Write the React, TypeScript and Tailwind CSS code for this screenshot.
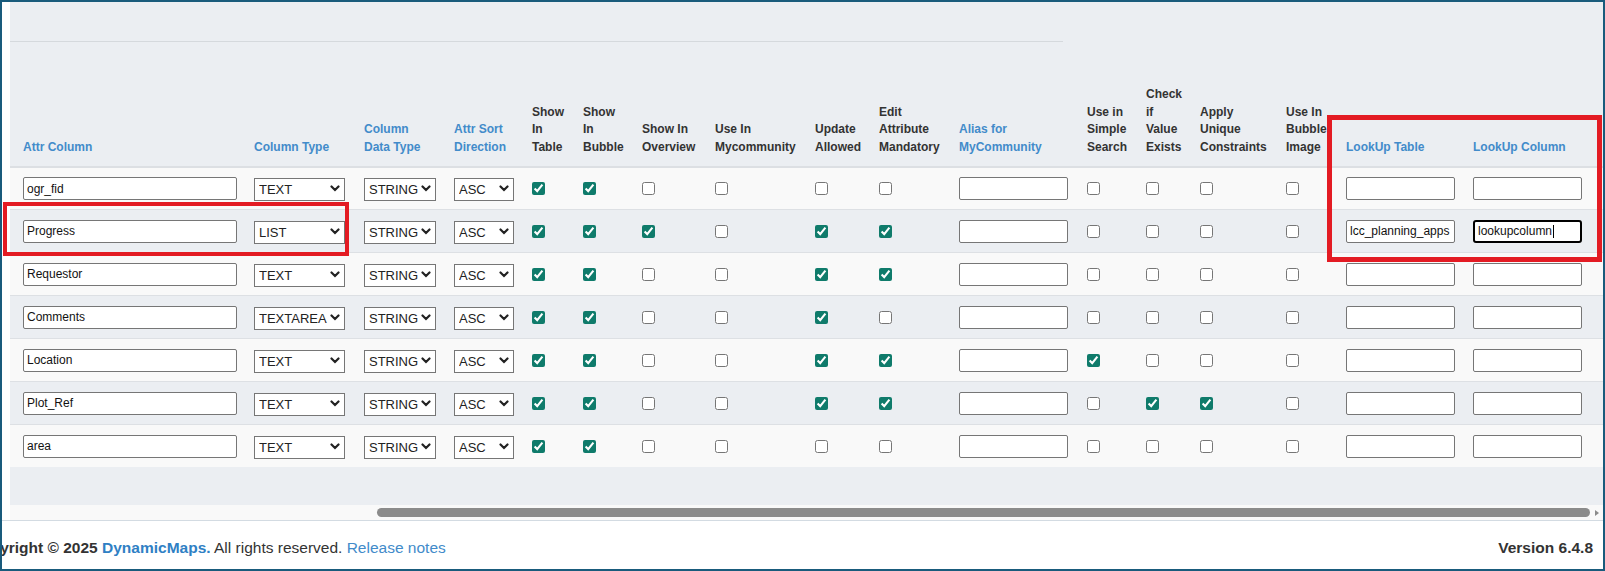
import { ReactNode } from 'react';

interface Col {
    w: string;
    label: string[];
    blue?: boolean;
}

const cols: Col[] = [
    { w: 'w-[231px]', label: ['Attr Column'], blue: true },
    { w: 'w-[110px]', label: ['Column Type'], blue: true },
    { w: 'w-[90px]', label: ['Column', 'Data Type'], blue: true },
    { w: 'w-[78px]', label: ['Attr Sort', 'Direction'], blue: true },
    { w: 'w-[51px]', label: ['Show', 'In', 'Table'] },
    { w: 'w-[59px]', label: ['Show', 'In', 'Bubble'] },
    { w: 'w-[73px]', label: ['Show In', 'Overview'] },
    { w: 'w-[100px]', label: ['Use In', 'Mycommunity'] },
    { w: 'w-[64px]', label: ['Update', 'Allowed'] },
    { w: 'w-[80px]', label: ['Edit', 'Attribute', 'Mandatory'] },
    { w: 'w-[128px]', label: ['Alias for', 'MyCommunity'], blue: true },
    { w: 'w-[59px]', label: ['Use in', 'Simple', 'Search'] },
    { w: 'w-[54px]', label: ['Check', 'if', 'Value', 'Exists'] },
    { w: 'w-[86px]', label: ['Apply', 'Unique', 'Constraints'] },
    { w: 'w-[60px]', label: ['Use In', 'Bubble', 'Image'] },
    { w: 'w-[127px]', label: ['LookUp Table'], blue: true },
    { w: 'w-[130px]', label: ['LookUp Column'], blue: true },
];

interface Row {
    name: string;
    type: string;
    checks: boolean[]; // table, bubble, overview, mycommunity, update, mandatory
    extra: boolean[]; // simple search, value exists, unique, bubble image
    lookupTable?: string;
    lookupColumn?: string;
}

const rows: Row[] = [
    { name: 'ogr_fid', type: 'TEXT', checks: [true, true, false, false, false, false], extra: [false, false, false, false] },
    {
        name: 'Progress',
        type: 'LIST',
        checks: [true, true, true, false, true, true],
        extra: [false, false, false, false],
        lookupTable: 'lcc_planning_apps',
        lookupColumn: 'lookupcolumn',
    },
    { name: 'Requestor', type: 'TEXT', checks: [true, true, false, false, true, true], extra: [false, false, false, false] },
    { name: 'Comments', type: 'TEXTAREA', checks: [true, true, false, false, true, false], extra: [false, false, false, false] },
    { name: 'Location', type: 'TEXT', checks: [true, true, false, false, true, true], extra: [true, false, false, false] },
    { name: 'Plot_Ref', type: 'TEXT', checks: [true, true, false, false, true, true], extra: [false, true, true, false] },
    { name: 'area', type: 'TEXT', checks: [true, true, false, false, false, false], extra: [false, false, false, false] },
];

function TextBox({ value, w }: { value: string; w: string }) {
    return (
        <input
            readOnly
            defaultValue={value}
            className={`${w} h-[23px] rounded-[2px] border border-[#767676] bg-white px-[3px] text-[12px] text-[#111] outline-none`}
        />
    );
}

function FocusedBox({ value }: { value: string }) {
    return (
        <div className="flex h-[23px] w-[109px] items-center rounded-[3px] border-2 border-black bg-white pl-[3px] text-[12px] text-[#111]">
            <span>{value}</span>
            <span className="ml-px inline-block h-[13px] w-px bg-black" />
        </div>
    );
}

function Select({ value, options, w }: { value: string; options: string[]; w: string }) {
    return (
        <div className={`relative h-[23px] ${w}`}>
            <select
                defaultValue={value}
                className="h-full w-full appearance-none border border-[#767676] bg-white pl-[4px] text-[13px] text-[#222] outline-none"
            >
                {options.map((o) => (
                    <option key={o}>{o}</option>
                ))}
            </select>
            <svg className="pointer-events-none absolute right-[5px] top-[8px]" width="10" height="7" viewBox="0 0 10 7">
                <path d="M1.5 1.5 L5 5 L8.5 1.5" stroke="#222" strokeWidth="2.2" fill="none" strokeLinecap="round" />
            </svg>
        </div>
    );
}

function Check({ on }: { on: boolean }) {
    return <input type="checkbox" readOnly checked={on} className="m-0 h-[13px] w-[13px] accent-[#0f7b6b]" />;
}

function Cell({ w, children }: { w: string; children?: ReactNode }) {
    return <div className={`${w} flex shrink-0 items-center`}>{children}</div>;
}

export default function App() {
    return (
        <div
            className="relative flex h-[571px] w-full flex-col border-2 border-[#195b7c] bg-white text-[#333]"
            style={{ fontFamily: '"Liberation Sans", Arial, sans-serif' }}
        >
            <div className="flex h-[518px]">
                <div className="w-[8px] shrink-0 bg-white" />
                <div className="flex flex-1 flex-col overflow-hidden bg-[#ebeef2]">
                    <div className="h-[39px]" />
                    <div className="h-px w-[1053px] bg-[#d5d9dd]" />

                    {/* header */}
                    <div className="flex h-[126px] items-end border-b-2 border-[#dcdfe3] pl-[13px] pb-[10px] text-[12px] font-bold leading-[17.5px]">
                        {cols.map((c, i) => (
                            <div key={i} className={`${c.w} shrink-0 whitespace-nowrap ${c.blue ? 'text-[#428bca]' : 'text-[#333]'}`}>
                                {c.label.map((l, j) => (
                                    <div key={j}>{l}</div>
                                ))}
                            </div>
                        ))}
                    </div>

                    {/* rows */}
                    {rows.map((r, idx) => (
                        <div
                            key={r.name}
                            className={`flex pl-[13px] ${idx === 0 ? 'h-[41px]' : 'h-[43px] border-t border-[#dde0e4]'} ${
                                idx % 2 === 0 ? 'bg-[#f9f9f9]' : ''
                            }`}
                        >
                            <Cell w={cols[0].w}>
                                <TextBox value={r.name} w="w-[214px]" />
                            </Cell>
                            <Cell w={cols[1].w}>
                                <Select value={r.type} options={['TEXT', 'LIST', 'TEXTAREA', 'NUMBER', 'DATE']} w="w-[91px]" />
                            </Cell>
                            <Cell w={cols[2].w}>
                                <Select value="STRING" options={['STRING', 'INTEGER', 'DOUBLE', 'DATE']} w="w-[72px]" />
                            </Cell>
                            <Cell w={cols[3].w}>
                                <Select value="ASC" options={['ASC', 'DESC']} w="w-[60px]" />
                            </Cell>
                            {r.checks.map((on, k) => (
                                <Cell key={k} w={cols[4 + k].w}>
                                    <Check on={on} />
                                </Cell>
                            ))}
                            <Cell w={cols[10].w}>
                                <TextBox value="" w="w-[109px]" />
                            </Cell>
                            {r.extra.map((on, k) => (
                                <Cell key={k} w={cols[11 + k].w}>
                                    <Check on={on} />
                                </Cell>
                            ))}
                            <Cell w={cols[15].w}>
                                <TextBox value={r.lookupTable ?? ''} w="w-[109px]" />
                            </Cell>
                            <Cell w={cols[16].w}>
                                {r.lookupColumn ? <FocusedBox value={r.lookupColumn} /> : <TextBox value="" w="w-[109px]" />}
                            </Cell>
                        </div>
                    ))}

                    <div className="flex-1" />

                    {/* horizontal scrollbar */}
                    <div className="flex h-[15px] items-center bg-[#f9f9f9] pl-[367px]">
                        <div className="h-[9px] w-[1213px] rounded-full bg-[#8b8b8b]" />
                        <div className="ml-[5px] h-0 w-0 border-y-[3px] border-l-[4px] border-y-transparent border-l-[#8b8b8b]" />
                    </div>
                </div>
            </div>

            {/* footer */}
            <div className="flex h-[49px] justify-between overflow-hidden border-t border-[#d3dbe2] bg-white pt-[17px] text-[15.5px] leading-[20px]">
                <div className="ml-[-32px] whitespace-nowrap">
                    <span className="font-bold text-[#333]">Copyright © 2025 </span>
                    <span className="font-bold text-[#2f80c4]">DynamicMaps.</span>
                    <span className="text-[#333]"> All rights reserved. </span>
                    <span className="text-[#428bca]">Release notes</span>
                </div>
                <div className="pr-[10px] font-bold text-[#333]">Version 6.4.8</div>
            </div>

            {/* annotation boxes */}
            <div className="pointer-events-none absolute left-[1px] top-[200px] h-[54px] w-[346px] border-4 border-[#e31b23]" />
            <div className="pointer-events-none absolute left-[1325px] top-[113px] h-[147px] w-[275px] border-[5px] border-[#e31b23]" />
        </div>
    );
}
